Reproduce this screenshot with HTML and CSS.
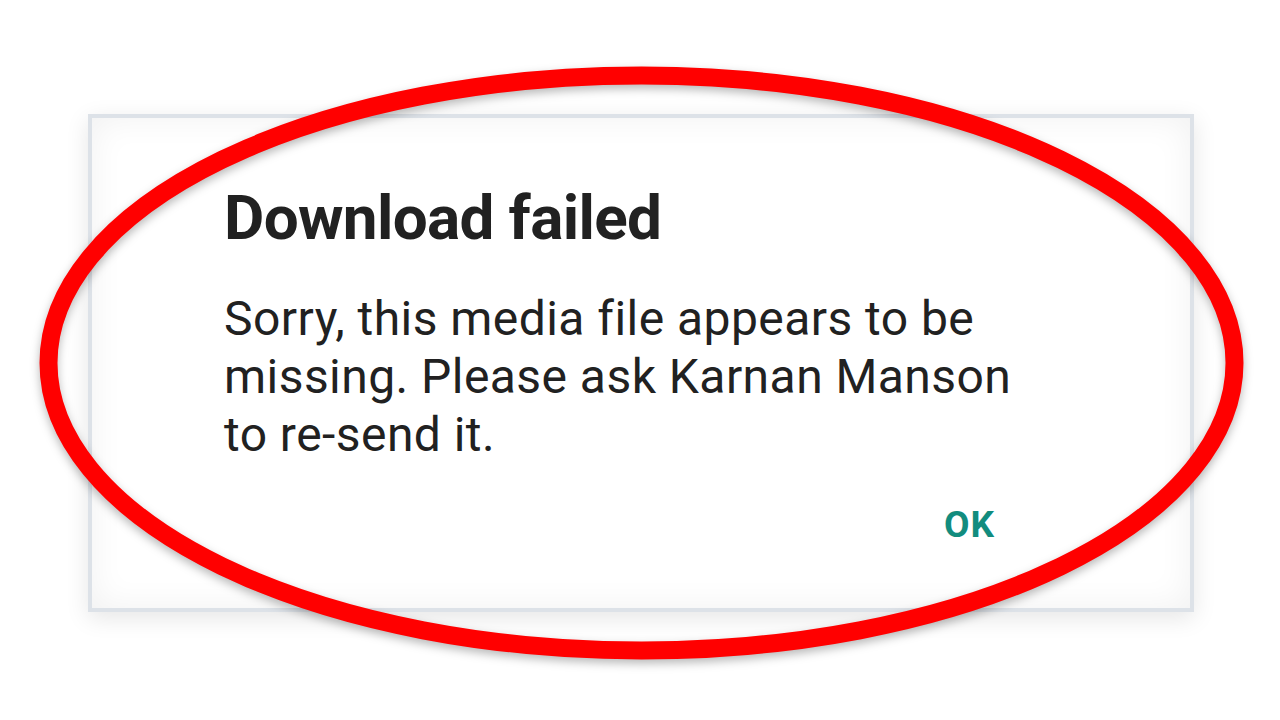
FILE: index.html
```html
<!DOCTYPE html>
<html lang="en">
<head>
<meta charset="utf-8">
<title>Download failed</title>
<link rel="stylesheet" href="styles.css">
</head>
<body>
<div class="stage">
  <div class="dialog">
    <h1 class="title">Download failed</h1>
    <p class="message">Sorry, this media file appears to be missing. Please ask Karnan Manson to re-send it.</p>
    <div class="actions"><span class="ok">OK</span></div>
  </div>
  <svg class="ring" width="1280" height="720" viewBox="0 0 1280 720" aria-hidden="true">
    <ellipse cx="641.5" cy="363" rx="593" ry="287.5" fill="none" stroke="#ff0000" stroke-width="18"/>
  </svg>
</div>
</body>
</html>
```
FILE: styles.css
```css
html, body {
  margin: 0;
  padding: 0;
  background: #ffffff;
}
.stage {
  position: relative;
  width: 1280px;
  height: 720px;
  overflow: hidden;
  padding: 114px 0 0 88px;
  box-sizing: border-box;
  font-family: Roboto, "Liberation Sans", sans-serif;
}
.dialog {
  width: 1106px;
  height: 498px;
  box-sizing: border-box;
  border: 4px solid #dde2e8;
  background: #ffffff;
  box-shadow: 0 6px 22px rgba(0, 0, 0, 0.10), inset 0 0 34px rgba(0, 0, 0, 0.06);
  padding: 63px 132px 0 132px;
  display: flex;
  flex-direction: column;
}
.title {
  margin: 0;
  font-size: 62px;
  line-height: 74px;
  font-weight: 700;
  letter-spacing: -0.65px;
  color: #212121;
}
.message {
  margin: 35px 0 0 0;
  font-size: 48px;
  line-height: 58px;
  font-weight: 400;
  letter-spacing: 0.45px;
  color: #212121;
  max-width: 805px;
}
.actions {
  margin-top: 39px;
  display: flex;
  justify-content: flex-end;
  padding-right: 63px;
}
.ok {
  font-size: 37px;
  line-height: 44px;
  font-weight: 700;
  color: #128c7e;
  letter-spacing: 1px;
}
.ring {
  position: absolute;
  left: 0;
  top: 0;
  filter: drop-shadow(0 4px 5px rgba(0, 0, 0, 0.28));
}
```
